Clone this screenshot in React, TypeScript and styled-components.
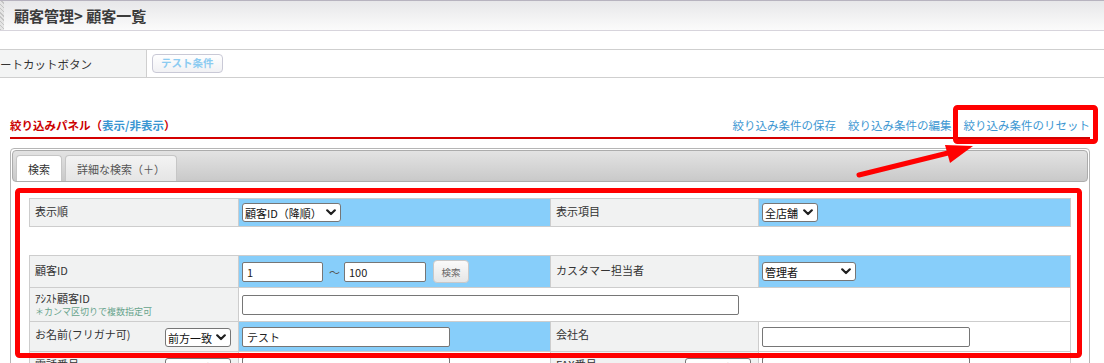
import React from "react";
import styled, { createGlobalStyle } from "styled-components";

const GlobalStyle = createGlobalStyle`
  html, body {
    margin: 0;
    padding: 0;
    background: #ffffff;
  }
  body {
    font-family: "Noto Sans CJK JP", "Noto Sans", sans-serif;
    color: #333333;
    overflow: hidden;
  }
`;

const Chevron = () => (
  <svg width="10" height="7" viewBox="0 0 10 7">
    <path d="M1.2 1.3 L5 5 L8.8 1.3" fill="none" stroke="#1f1f1f" strokeWidth="2.2" strokeLinecap="round" strokeLinejoin="round" />
  </svg>
);

function Select({ value, width }: { value: string; width: number }) {
  return (
    <SelectWrap style={{ width }}>
      <NativeSelect defaultValue={value}>
        <option>{value}</option>
      </NativeSelect>
      <ChevronSlot>
        <Chevron />
      </ChevronSlot>
    </SelectWrap>
  );
}

function App() {
  return (
    <>
      <GlobalStyle />
      <Page>
        <Header>
          <Stripe />
          <Title>顧客管理&gt; 顧客一覧</Title>
        </Header>

        <ShortcutRow>
          <ShortcutLabel>ートカットボタン</ShortcutLabel>
          <ShortcutButton>テスト条件</ShortcutButton>
        </ShortcutRow>

        <Filter>
          <FilterHead>
            <PanelTitle>
              絞り込みパネル（<Toggle>表示/非表示</Toggle>）
            </PanelTitle>
            <Links>
              <Link>絞り込み条件の保存</Link>
              <Link>絞り込み条件の編集</Link>
              <Link>絞り込み条件のリセット</Link>
            </Links>
          </FilterHead>

          <Panel>
            <TabBar>
              <Tab $active>検索</Tab>
              <Tab>詳細な検索（＋）</Tab>
            </TabBar>

            <TabBody>
              <FormTable>
                <Cols />
                <tbody>
                  <Row $h={28}>
                    <LabelCell>表示順</LabelCell>
                    <ValueCell $tone="blue">
                      <Select value="顧客ID（降順）" width={99} />
                    </ValueCell>
                    <LabelCell>表示項目</LabelCell>
                    <ValueCell $tone="blue">
                      <Select value="全店舗" width={56} />
                    </ValueCell>
                  </Row>
                </tbody>
              </FormTable>

              <FormTable $gap>
                <Cols />
                <tbody>
                  <Row $h={32}>
                    <LabelCell $pad={7}>顧客ID</LabelCell>
                    <ValueCell $tone="blue">
                      <Inline>
                        <TextInput $w={81} defaultValue="1" />
                        <Tilde>～</Tilde>
                        <TextInput $w={82} defaultValue="100" />
                        <SmallButton>検索</SmallButton>
                      </Inline>
                    </ValueCell>
                    <LabelCell $pad={7}>カスタマー担当者</LabelCell>
                    <ValueCell $tone="blue">
                      <Select value="管理者" width={94} />
                    </ValueCell>
                  </Row>
                  <Row $h={34}>
                    <LabelCell $pad={3}>
                      ｱｼｽﾄ顧客ID
                      <Note>＊カンマ区切りで複数指定可</Note>
                    </LabelCell>
                    <ValueCell colSpan={3}>
                      <TextInput $w={497} />
                    </ValueCell>
                  </Row>
                  <Row $h={30}>
                    <LabelCell>
                      <LabelSplit>
                        お名前(フリガナ可)
                        <Select value="前方一致" width={66} />
                      </LabelSplit>
                    </LabelCell>
                    <ValueCell $tone="blue">
                      <TextInput $w={208} defaultValue="テスト" />
                    </ValueCell>
                    <LabelCell>会社名</LabelCell>
                    <ValueCell>
                      <TextInput $w={208} />
                    </ValueCell>
                  </Row>
                  <Row $h={30}>
                    <LabelCell>
                      <LabelSplit>
                        電話番号
                        <Select value="前方一致" width={66} />
                      </LabelSplit>
                    </LabelCell>
                    <ValueCell>
                      <TextInput $w={208} />
                    </ValueCell>
                    <LabelCell>
                      <LabelSplit>
                        FAX番号
                        <Select value="前方一致" width={66} />
                      </LabelSplit>
                    </LabelCell>
                    <ValueCell>
                      <TextInput $w={208} />
                    </ValueCell>
                  </Row>
                </tbody>
              </FormTable>
            </TabBody>
          </Panel>
        </Filter>

        {/* red callouts drawn on top of the screenshot */}
        <Callouts width="1104" height="363" viewBox="0 0 1104 363">
          <rect x="955.5" y="107.5" width="140" height="34" rx="2" fill="none" stroke="#ff0000" strokeWidth="5" />
          <rect x="17.5" y="190.5" width="1062" height="165" rx="2" fill="none" stroke="#ff0000" strokeWidth="5" />
          <line x1="859" y1="175" x2="952" y2="152" stroke="#ff0000" strokeWidth="5" strokeLinecap="round" />
          <polygon points="945,145 973,146 950,163" fill="#ff0000" />
        </Callouts>
      </Page>
    </>
  );
}

const Cols = () => (
  <colgroup>
    <col style={{ width: 209 }} />
    <col style={{ width: 312 }} />
    <col style={{ width: 208 }} />
    <col style={{ width: 312 }} />
  </colgroup>
);

const Page = styled.div`
  position: relative;
  width: 1104px;
  height: 363px;
  overflow: hidden;
`;

const Header = styled.div`
  display: flex;
  align-items: center;
  height: 29px;
  border-top: 1px solid #b7b3bf;
  border-bottom: 1px solid #d7d4dc;
  background: linear-gradient(#e7e7e9, #fbfbfb);
`;

const Stripe = styled.div`
  align-self: stretch;
  width: 4px;
  background: repeating-linear-gradient(45deg, #c4c4c4 0 1px, #e4e4e4 1px 3px);
`;

const Title = styled.h1`
  margin: 0 0 0 10px;
  font-size: 15px;
  font-weight: bold;
  line-height: 1;
  color: #3b3b3b;
`;

const ShortcutRow = styled.div`
  display: flex;
  align-items: center;
  height: 27px;
  margin-top: 18px;
  border-top: 1px solid #cfcfcf;
  border-bottom: 1px solid #cfcfcf;
`;

const ShortcutLabel = styled.div`
  display: flex;
  align-items: center;
  align-self: stretch;
  width: 146px;
  background: #f3f4f4;
  border-right: 1px solid #cfcfcf;
  font-size: 11.5px;
  color: #333;
  white-space: nowrap;
`;

const ShortcutButton = styled.button`
  height: 19px;
  margin-left: 5px;
  padding: 0 8px;
  border: 1px solid #c9c9d6;
  border-radius: 4px;
  background: linear-gradient(#ffffff, #f1f1f4);
  color: #8ccbf1;
  font-family: inherit;
  font-size: 10.5px;
  font-weight: bold;
  line-height: 1;
`;

const Filter = styled.section`
  margin: 37px 14px 0 10px;
`;

const FilterHead = styled.div`
  display: flex;
  justify-content: space-between;
  align-items: flex-end;
  height: 18px;
  padding-bottom: 4px;
  border-bottom: 2px solid #d40000;
`;

const PanelTitle = styled.div`
  font-size: 11.5px;
  font-weight: bold;
  line-height: 16px;
  color: #cc0000;
`;

const Toggle = styled.span`
  color: #3a96d2;
`;

const Links = styled.div`
  display: flex;
  gap: 12px;
`;

const Link = styled.a`
  font-size: 11.5px;
  line-height: 16px;
  color: #3d97d2;
  cursor: pointer;
`;

const Panel = styled.div`
  margin-top: 9px;
  padding: 1px;
  border: 1px solid #b5b5b5;
  border-radius: 4px;
`;

const TabBar = styled.div`
  display: flex;
  align-items: flex-end;
  gap: 3px;
  height: 30px;
  padding: 0 3px;
  border: 1px solid #acacac;
  border-radius: 4px;
  background: linear-gradient(#e3e3e3, #c9c9c9);
`;

const Tab = styled.div<{ $active?: boolean }>`
  display: flex;
  align-items: center;
  height: 26px;
  padding: 0 11px;
  border: 1px solid #c6c6c6;
  border-bottom: none;
  border-radius: 4px 4px 0 0;
  background: ${(p) => (p.$active ? "#ffffff" : "linear-gradient(#f3f3f3, #e5e5e5)")};
  color: ${(p) => (p.$active ? "#333" : "#555")};
  font-size: 11px;
  box-sizing: border-box;
`;

const TabBody = styled.div`
  padding: 16px 17px 0 17px;
`;

const FormTable = styled.table<{ $gap?: boolean }>`
  width: 1041px;
  margin-top: ${(p) => (p.$gap ? "28px" : "0")};
  border-collapse: collapse;
  table-layout: fixed;
  font-size: 11px;
  color: #333;
`;

const Row = styled.tr<{ $h: number }>`
  height: ${(p) => p.$h}px;
`;

const LabelCell = styled.td<{ $pad?: number }>`
  padding: ${(p) => p.$pad ?? 5}px 5px 0 5px;
  border: 1px solid #cdcdcd;
  background: #f1f2f2;
  vertical-align: top;
  line-height: 14px;
  white-space: nowrap;
`;

const ValueCell = styled.td<{ $tone?: "blue" }>`
  padding: 0 3px;
  border: 1px solid #cdcdcd;
  background: ${(p) => (p.$tone === "blue" ? "#87cefa" : "#ffffff")};
  vertical-align: middle;
`;

const LabelSplit = styled.div`
  display: flex;
  justify-content: space-between;
  align-items: flex-start;
  padding-right: 2px;

  & > span {
    margin-top: 1px;
  }
`;

const Note = styled.div`
  margin-top: 1px;
  font-size: 9px;
  line-height: 12px;
  color: #66a38b;
`;

const Inline = styled.div`
  display: flex;
  align-items: center;
`;

const TextInput = styled.input<{ $w: number }>`
  display: block;
  width: ${(p) => p.$w}px;
  height: 20px;
  box-sizing: border-box;
  padding: 0 4px;
  border: 1px solid #767676;
  border-radius: 2px;
  background: #ffffff;
  font-family: inherit;
  font-size: 11px;
  color: #222;
`;

const Tilde = styled.span`
  margin: 0 4px 0 6px;
  font-size: 11px;
  color: #555;
`;

const SmallButton = styled.button`
  width: 36px;
  height: 23px;
  margin-left: 7px;
  padding: 0;
  border: 1px solid #c8c8c8;
  border-radius: 4px;
  background: linear-gradient(#fafafa, #e6e6e6);
  color: #666;
  font-family: inherit;
  font-size: 9.5px;
`;

const SelectWrap = styled.span`
  position: relative;
  display: inline-block;
  height: 19px;
  vertical-align: middle;
`;

const NativeSelect = styled.select`
  appearance: none;
  width: 100%;
  height: 19px;
  box-sizing: border-box;
  padding: 0 14px 0 2px;
  border: 1px solid #767676;
  border-radius: 3px;
  background: #ffffff;
  font-family: inherit;
  font-size: 11px;
  color: #111;
`;

const ChevronSlot = styled.span`
  position: absolute;
  right: 5px;
  top: 6px;
  display: flex;
  pointer-events: none;
`;

const Callouts = styled.svg`
  position: absolute;
  left: 0;
  top: 0;
  pointer-events: none;
`;

export default App;
